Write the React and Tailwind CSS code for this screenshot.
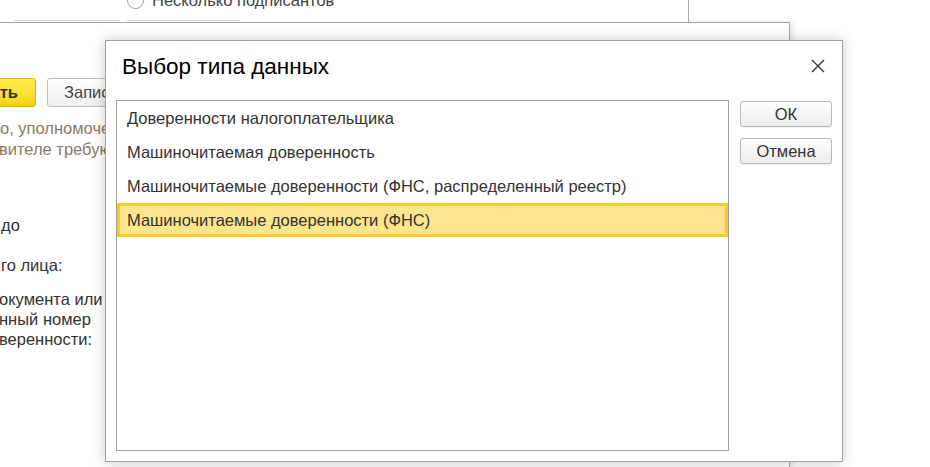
import React from "react";

const items = [
  "Доверенности налогоплательщика",
  "Машиночитаемая доверенность",
  "Машиночитаемые доверенности (ФНС, распределенный реестр)",
  "Машиночитаемые доверенности (ФНС)",
];

function CloseIcon() {
  return (
    <svg width="14" height="14" viewBox="0 0 14 14" fill="none">
      <path d="M1 1L13 13M13 1L1 13" stroke="#333" strokeWidth="1.4" />
    </svg>
  );
}

function DialogButton({ children }) {
  return (
    <button className="h-[26px] w-full rounded-[3px] border border-[#b8b8b8] bg-gradient-to-b from-white to-[#ececec] text-[16.5px] text-[#333] leading-none shadow-[0_1px_1px_rgba(0,0,0,0.06)]">
      {children}
    </button>
  );
}

export default function App() {
  const selected = 3;
  return (
    <div
      className="relative w-[930px] h-[467px] overflow-hidden bg-white"
      style={{ fontFamily: '"Liberation Sans", Arial, sans-serif' }}
    >
      {/* form behind: signature settings */}
      <div className="absolute left-[-2px] top-[22px] w-[792px] h-[470px] border border-[#a6a6a6] bg-white shadow-[2px_0_6px_rgba(0,0,0,0.12)]">
        <div className="flex flex-col pl-[2px] pt-[55px]">
          <div className="flex items-center gap-[11px]">
            <button className="ml-[-80px] flex h-[29px] w-[115px] items-center justify-end rounded-[3px] border border-[#d6b400] bg-gradient-to-b from-[#ffee50] to-[#f3d300] pr-[17px] text-[16.5px] font-bold text-[#333]">
              Подписать
            </button>
            <button className="flex h-[29px] w-[140px] items-center rounded-[3px] border border-[#bdbdbd] bg-gradient-to-b from-white to-[#efefef] pl-[16px] text-[16.5px] text-[#444]">
              Записать
            </button>
          </div>
          <div className="mt-[11px] flex flex-col text-[16.5px] leading-[21px] text-[#8a7968] whitespace-nowrap">
            <span className="ml-[-1px]">о, уполномоченное лицо</span>
            <span className="ml-[-2px]">вителе требуются</span>
          </div>
          <div className="mt-[55px] text-[16.5px] leading-[20px] text-[#333] whitespace-nowrap">до</div>
          <div className="mt-[20px] text-[16.5px] leading-[20px] text-[#333] whitespace-nowrap">го лица:</div>
          <div className="mt-[14px] flex flex-col text-[16.5px] leading-[20px] text-[#333] whitespace-nowrap">
            <span className="ml-[-2px]">окумента или</span>
            <span className="ml-[-2px]">нный номер</span>
            <span className="ml-[-2px]">веренности:</span>
          </div>
          <div className="mt-[117px] pl-[120px] text-[13px] leading-[16px] text-[#b5483a] whitespace-nowrap">
            Представление доверенности будет заполнено автоматически при выборе файла доверенности
          </div>
        </div>
      </div>

      {/* topmost strip of the first form */}
      <div className="absolute left-[-2px] top-[-30px] w-[691px] h-[53px] border-r border-b border-[#a6a6a6] bg-white">
        <div className="flex items-center pl-[129px] pt-[21px]">
          <span className="h-[17px] w-[17px] shrink-0 rounded-full border border-[#9a9a9a] bg-white" />
          <span className="ml-[8px] text-[16.5px] leading-[18px] text-[#444] whitespace-nowrap">
            Несколько подписантов
          </span>
        </div>
        <div className="mt-[11px] flex gap-[7px] pl-[16px]">
          <div className="h-px w-[106px] bg-[#d6d6d6]" />
          <div className="h-px w-[113px] bg-[#d6d6d6]" />
        </div>
      </div>

      {/* data type selection dialog */}
      <div className="absolute left-[105px] top-[40px] flex w-[738px] h-[422px] flex-col border border-[#a3a3a3] bg-white shadow-[0_0_12px_rgba(0,0,0,0.22)]">
        <div className="flex h-[52px] shrink-0 items-center justify-between pl-[16px] pr-[17px]">
          <span className="text-[22.5px] leading-none text-black whitespace-nowrap">Выбор типа данных</span>
          <span className="mt-[-3px]">
            <CloseIcon />
          </span>
        </div>
        <div className="mt-[7px] flex flex-1 gap-[11px] px-[10px] pb-[10px]">
          <div className="flex-1 border border-[#a0a0a0] bg-white">
            {items.map((t, i) => (
              <div
                key={t}
                className={
                  i === selected
                    ? "flex h-[34px] items-center border-[3px] border-[#f8cd26] bg-[#fde58e] pl-[7px] text-[16.5px] text-[#333] whitespace-nowrap"
                    : "flex h-[34px] items-center pl-[10px] text-[16.5px] text-[#333] whitespace-nowrap"
                }
              >
                {t}
              </div>
            ))}
          </div>
          <div className="flex w-[92px] flex-col gap-[11px] pt-[1px]">
            <DialogButton>ОК</DialogButton>
            <DialogButton>Отмена</DialogButton>
          </div>
        </div>
      </div>
    </div>
  );
}
